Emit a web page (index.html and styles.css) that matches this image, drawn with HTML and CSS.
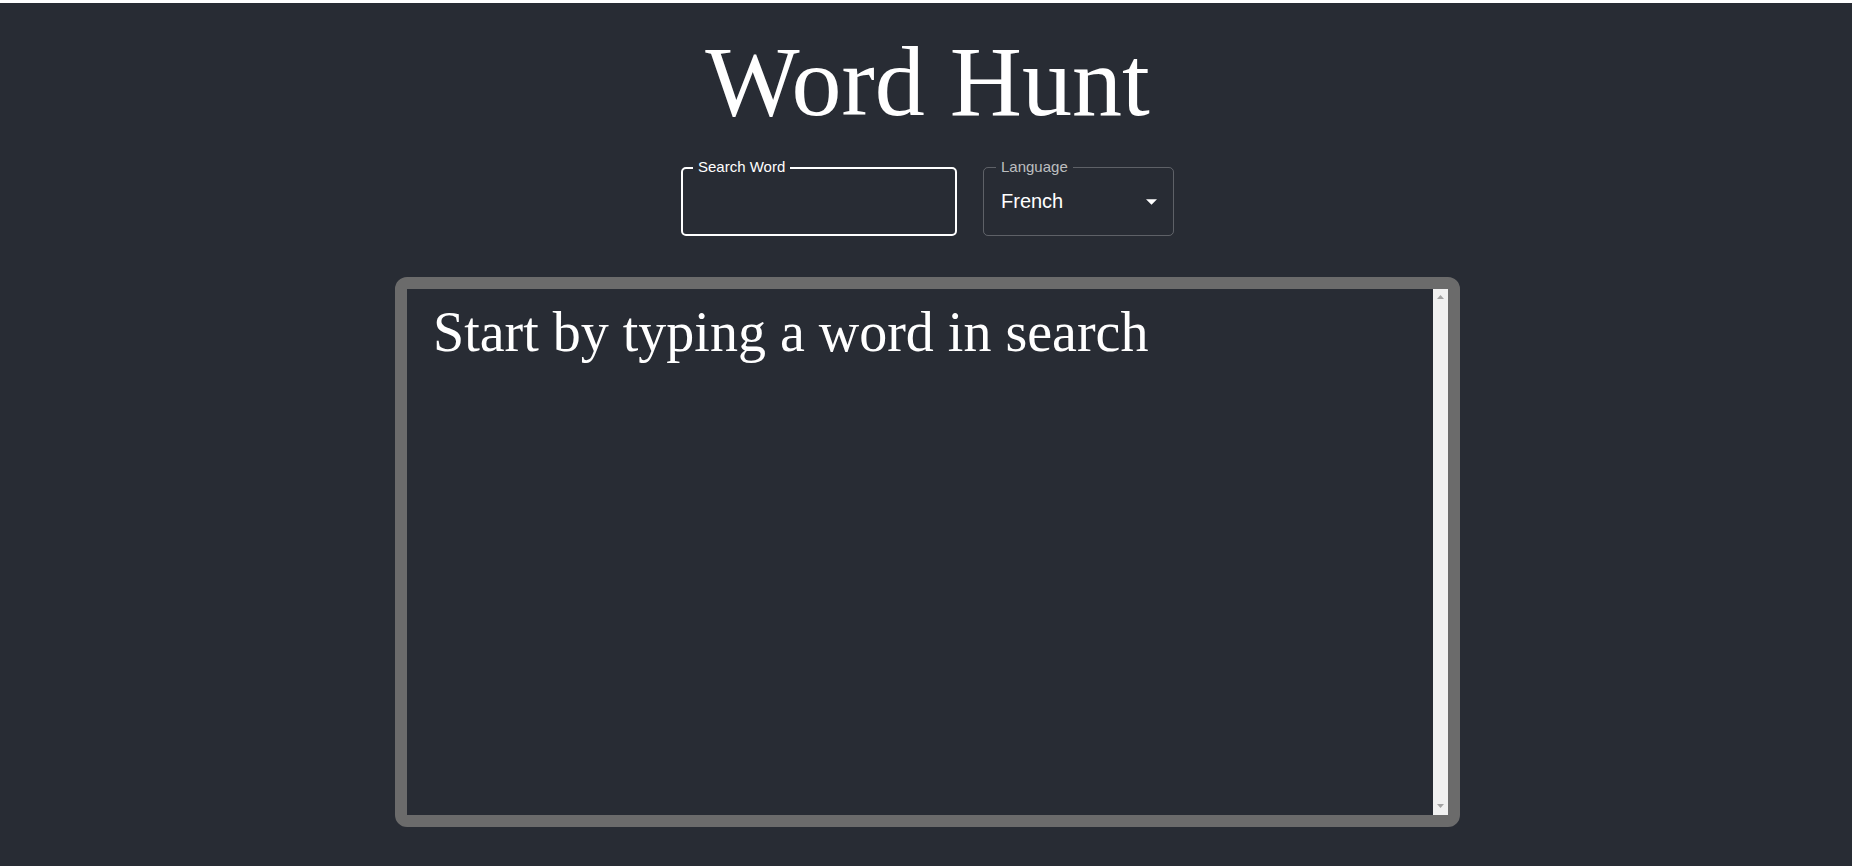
FILE: index.html
```html
<!DOCTYPE html>
<html lang="en">
<head>
<meta charset="utf-8">
<title>Word Hunt</title>
<link rel="stylesheet" href="styles.css">
</head>
<body>
<div class="app">
  <h1 class="title">Word Hunt</h1>
  <div class="controls">
    <div class="field field-search">
      <span class="field-label label-search">Search Word</span>
      <input class="field-input" type="text" aria-label="Search Word">
    </div>
    <div class="field field-lang">
      <span class="field-label label-lang">Language</span>
      <span class="select-value">French</span>
      <svg class="select-arrow" width="11" height="6" viewBox="0 0 10 5"><path d="M0 0l5 5 5-5z" fill="#fff"/></svg>
    </div>
  </div>
  <div class="results">
    <div class="results-content">
      <p class="placeholder">Start by typing a word in search</p>
    </div>
    <div class="scrollbar" aria-hidden="true">
      <div class="scroll-btn scroll-up"><svg width="7" height="4" viewBox="0 0 7 4"><path d="M0 4L3.5 0L7 4z" fill="#a3a3a3"/></svg></div>
      <div class="scroll-btn scroll-down"><svg width="7" height="4" viewBox="0 0 7 4"><path d="M0 0L3.5 4L7 0z" fill="#a3a3a3"/></svg></div>
    </div>
  </div>
</div>
</body>
</html>
```
FILE: styles.css
```css
html, body {
  margin: 0;
  padding: 0;
}
body {
  background: #282c34;
  border-top: 3px solid #ffffff;
  height: 863px;
  overflow: hidden;
  color: #ffffff;
  font-family: "Liberation Serif", "Times New Roman", serif;
}
.app {
  display: flex;
  flex-direction: column;
  align-items: center;
  padding-left: 3px;
}
.title {
  margin: 21px 0 0;
  font-size: 100px;
  font-weight: normal;
  line-height: normal;
  color: #ffffff;
}
.controls {
  display: flex;
  justify-content: center;
  gap: 26px;
  margin-top: 28px;
  font-family: "Liberation Sans", Arial, sans-serif;
}
.field {
  position: relative;
  box-sizing: border-box;
  height: 69px;
  border-radius: 5px;
  display: flex;
  align-items: center;
}
.field-search {
  width: 276px;
  border: 2px solid #ffffff;
}
.field-lang {
  width: 191px;
  border: 1px solid rgba(255, 255, 255, 0.25);
  padding: 0 16px 0 17px;
  justify-content: space-between;
}
.field-label {
  position: absolute;
  padding: 0 5px;
  background: #282c34;
  font-size: 15px;
  line-height: 15px;
  white-space: nowrap;
}
.label-search {
  top: -10px;
  left: 10px;
  color: #ffffff;
}
.label-lang {
  top: -9px;
  left: 12px;
  color: rgba(255, 255, 255, 0.7);
}
.field-input {
  width: 100%;
  height: 100%;
  box-sizing: border-box;
  border: none;
  background: transparent;
  outline: none;
  color: #ffffff;
  font: 20px "Liberation Sans", Arial, sans-serif;
  padding: 0 17px;
}
.select-value {
  font-size: 20px;
  color: #ffffff;
}
.select-arrow {
  display: block;
  margin-top: 1px;
}
.results {
  box-sizing: border-box;
  width: 1065px;
  height: 550px;
  margin-top: 41px;
  border: 12px solid #6b6b6b;
  border-radius: 12px;
  display: flex;
  overflow: hidden;
}
.results-content {
  flex: 1;
  min-width: 0;
  overflow: hidden;
}
.scrollbar {
  width: 15px;
  flex: none;
  background: #f1f1f1;
  display: flex;
  flex-direction: column;
  justify-content: space-between;
}
.scroll-btn {
  height: 15px;
  display: flex;
  justify-content: center;
}
.scroll-btn svg {
  display: block;
}
.scroll-up {
  align-items: center;
}
.scroll-down {
  align-items: flex-start;
  padding-top: 4px;
  box-sizing: border-box;
}
.placeholder {
  margin: 0;
  padding: 11px 23px 11px 26px;
  font-size: 56px;
  line-height: normal;
  color: #ffffff;
}
```
